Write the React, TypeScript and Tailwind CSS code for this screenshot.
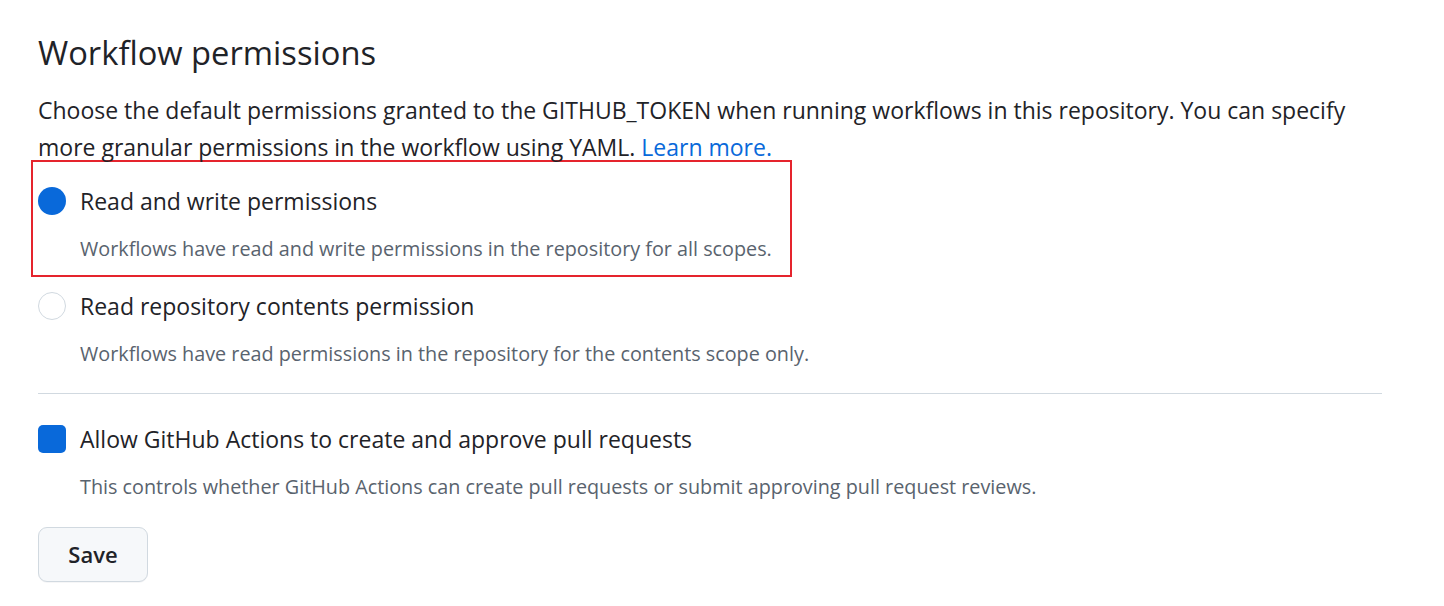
export default function App() {
  return (
    <div className="min-h-[606px] bg-white font-['Open_Sans',sans-serif] text-[#1f2328]">
      <div className="w-[1344px] ml-[38px] pt-[30px]">
        <h2 className="text-[32.7px] leading-[46px] font-normal">Workflow permissions</h2>

        <p className="mt-[16px] text-[23px] leading-[37px]">
          Choose the default permissions granted to the GITHUB_TOKEN when running workflows in this repository. You can specify
          more granular permissions in the workflow using YAML. <a href="#" className="text-[#0969da]">Learn more.</a>
        </p>

        {/* highlighted option */}
        <div className="-ml-[7px] mt-[-6px] w-[761px] border-2 border-[#e5242d] pl-[5px] pt-[24px] pb-[12px]">
          <label className="flex items-center gap-[14px]">
            <span className="w-[28px] h-[28px] rounded-full bg-[#0969da]" />
            <span className="text-[23px] leading-[30px]">Read and write permissions</span>
          </label>
          <p className="ml-[42px] mt-[19px] text-[19.8px] leading-[28px] text-[#59636e]">
            Workflows have read and write permissions in the repository for all scopes.
          </p>
        </div>

        <div className="mt-[14px]">
          <label className="flex items-center gap-[14px]">
            <span className="w-[28px] h-[28px] rounded-full border border-[#d1d9e0] bg-white" />
            <span className="text-[23px] leading-[30px]">Read repository contents permission</span>
          </label>
          <p className="ml-[42px] mt-[19px] text-[19.8px] leading-[28px] text-[#59636e]">
            Workflows have read permissions in the repository for the contents scope only.
          </p>
        </div>

        <div className="mt-[25px] h-px bg-[#d1d9e0]" />

        <div className="mt-[30px]">
          <label className="flex items-center gap-[14px]">
            <span className="w-[28px] h-[28px] rounded-[5px] bg-[#0969da]" />
            <span className="text-[23px] leading-[30px]">Allow GitHub Actions to create and approve pull requests</span>
          </label>
          <p className="ml-[42px] mt-[19px] text-[19.8px] leading-[28px] text-[#59636e]">
            This controls whether GitHub Actions can create pull requests or submit approving pull request reviews.
          </p>
        </div>

        <button className="mt-[26px] w-[110px] h-[55px] rounded-[9px] border border-[#d1d9e0] bg-[#f6f8fa] shadow-[0_1px_0_rgba(31,35,40,0.04)] text-[22px] font-semibold">
          Save
        </button>
      </div>
    </div>
  );
}
